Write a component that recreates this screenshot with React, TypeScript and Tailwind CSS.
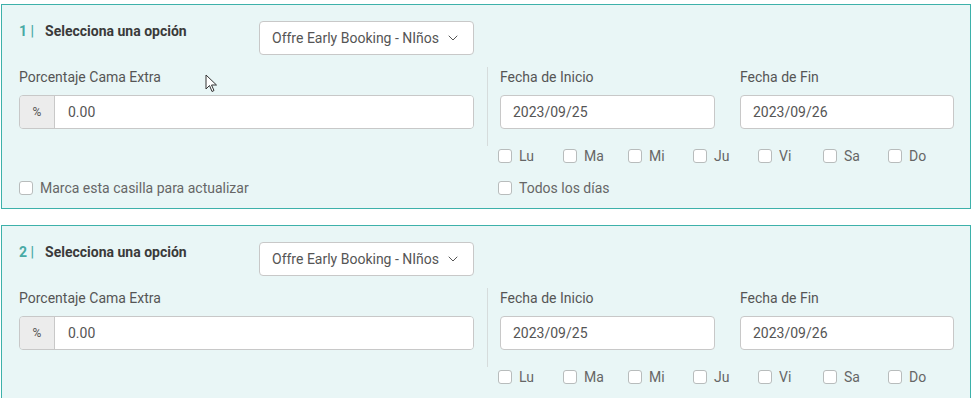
import React from "react";
import { ChevronDown } from "lucide-react";

const days = ["Lu", "Ma", "Mi", "Ju", "Vi", "Sa", "Do"];

function Box() {
  return (
    <span className="inline-block w-[14px] h-[14px] rounded-[3px] border border-[#b8bcbc] bg-white shrink-0" />
  );
}

function Check({ label, className = "" }: { label: string; className?: string }) {
  return (
    <div className={"flex items-center h-[20px] " + className}>
      <Box />
      <span className="ml-[7px] text-[14px] text-[#666]">{label}</span>
    </div>
  );
}

function Panel({ n, cursor }: { n: number; cursor?: boolean }) {
  return (
    <div className="relative w-[970px] border border-[#3db1aa] bg-[#e9f6f6] pl-[17px] pr-[16px] pt-[16px] pb-[10px]">
      <div className="flex items-start h-[34px]">
        <div className="w-[240px] flex leading-[20px] text-[14px] font-bold">
          <span className="text-[#48aaa5]">{n} |</span>
          <span className="ml-[11px] text-[#3a3a3a]">Selecciona una opción</span>
        </div>
        <div className="w-[215px] h-[34px] bg-white border border-[#c8c8c8] rounded-[4px] flex items-center pl-[12px] pr-[12px] text-[14px] text-[#555]">
          <span className="flex-1">Offre Early Booking - NIños</span>
          <ChevronDown size={16} strokeWidth={1.5} className="text-[#555]" />
        </div>
      </div>
      <div className="flex mt-[12px]">
        <div className="w-[455px] flex flex-col">
          <div className="h-[20px] leading-[20px] text-[14px] text-[#555]">Porcentaje Cama Extra</div>
          <div className="mt-[8px] h-[34px] flex border border-[#c8c8c8] rounded-[4px] overflow-hidden">
            <div className="w-[35px] bg-[#ececec] border-r border-[#c8c8c8] flex items-center justify-center text-[12px] text-[#555]">%</div>
            <div className="flex-1 bg-white flex items-center pl-[13px] text-[14px] text-[#555]">0.00</div>
          </div>
          <div className="mt-auto">
            <Check label="Marca esta casilla para actualizar" />
          </div>
        </div>
        <div className="ml-[13px] flex-1 flex flex-col">
          <div className="border-l border-[#d6dcdc] pl-[12px] pb-[17px] flex gap-[25px]">
            <div className="w-[215px]">
              <div className="h-[20px] leading-[20px] text-[14px] text-[#555]">Fecha de Inicio</div>
              <div className="mt-[8px] h-[34px] bg-white border border-[#c8c8c8] rounded-[4px] flex items-center pl-[12px] text-[14px] text-[#555]">2023/09/25</div>
            </div>
            <div className="w-[214px]">
              <div className="h-[20px] leading-[20px] text-[14px] text-[#555]">Fecha de Fin</div>
              <div className="mt-[8px] h-[34px] bg-white border border-[#c8c8c8] rounded-[4px] flex items-center pl-[12px] text-[14px] text-[#555]">2023/09/26</div>
            </div>
          </div>
          <div className="pl-[11px] flex">
            {days.map((d) => (
              <Check key={d} label={d} className="w-[65px]" />
            ))}
          </div>
          <div className="pl-[11px] mt-[12px]">
            <Check label="Todos los días" />
          </div>
        </div>
      </div>
      {cursor && (
        <svg
          className="absolute left-[203px] top-[69px]"
          width="13"
          height="19"
          viewBox="0 0 13 19"
        >
          <path
            d="M1 1 L1 15 L4.5 11.5 L7 17.5 L9 16.5 L6.5 11 L11.5 11 Z"
            fill="white"
            stroke="#333"
            strokeWidth="1"
            strokeLinejoin="round"
          />
        </svg>
      )}
    </div>
  );
}

export default function App() {
  return (
    <div
      className="bg-white pt-[4px] pl-[1px] flex flex-col gap-[16px] w-[973px] h-[398px] overflow-hidden"
      style={{ fontFamily: "Roboto, 'Noto Sans', sans-serif" }}
    >
      <Panel n={1} cursor />
      <Panel n={2} />
    </div>
  );
}
